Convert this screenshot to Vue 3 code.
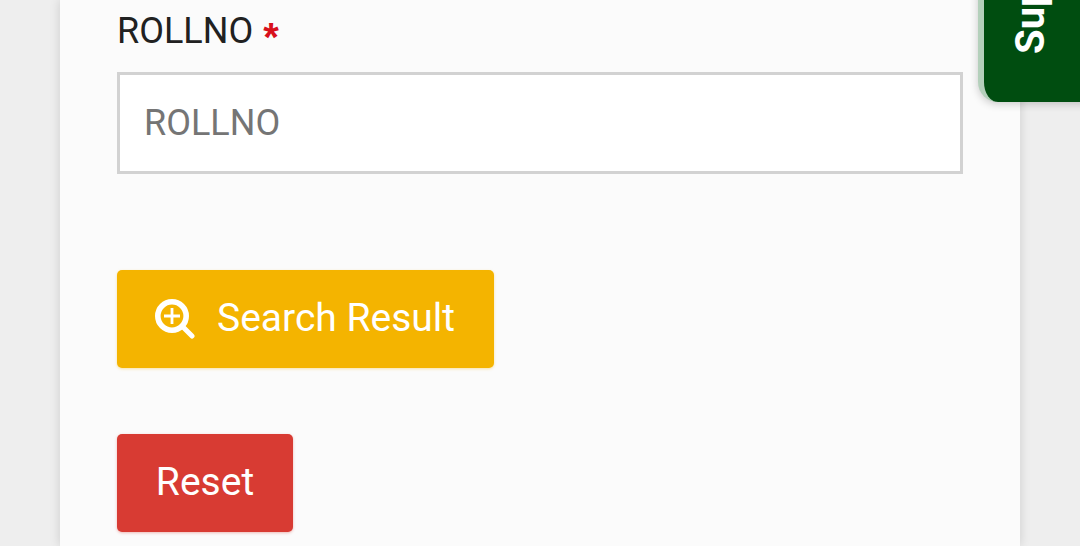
<script setup>
const label = 'ROLLNO'
</script>

<template>
  <div class="page">
    <main class="card">
      <label class="label" for="roll">{{ label }}<span class="req">*</span></label>
      <input id="roll" class="input" type="text" :placeholder="label" />
      <button class="btn search" type="button">
        <svg class="icon" viewBox="0 0 40 40" width="40" height="40" aria-hidden="true">
          <circle cx="17" cy="17" r="14.2" fill="none" stroke="#fff" stroke-width="5.6" />
          <path d="M28 28 L37 37" stroke="#fff" stroke-width="5" stroke-linecap="round" />
          <path d="M17 9 V25 M9 17 H25" stroke="#fff" stroke-width="2.8" />
        </svg>
        <span class="btn-text">Search Result</span>
      </button>
      <button class="btn reset" type="button"><span class="btn-text">Reset</span></button>
    </main>
    <aside class="tab"><span class="tab-text">Support</span></aside>
  </div>
</template>

<style scoped>
.page {
  position: relative;
  height: 546px;
  overflow: hidden;
  background: #eeeeee;
  font-family: Roboto, "Liberation Sans", sans-serif;
}
.card {
  display: flex;
  flex-direction: column;
  align-items: flex-start;
  width: 960px;
  height: 546px;
  margin-left: 60px;
  padding: 10px 57px 0;
  box-sizing: border-box;
  background: #fbfbfb;
  box-shadow: 0 0 10px rgba(0, 0, 0, 0.14);
}
.label {
  height: 42px;
  font-size: 36px;
  line-height: 42px;
  color: #212121;
}
.req {
  position: relative;
  top: 8px;
  margin-left: 10px;
  font-family: "Liberation Sans", sans-serif;
  font-size: 40px;
  line-height: 1px;
  font-weight: 700;
  color: #d8101c;
}
.input {
  width: 846px;
  height: 102px;
  margin-top: 20px;
  padding: 0 24px;
  box-sizing: border-box;
  border: 3px solid #d2d2d2;
  border-radius: 0;
  outline: none;
  background: #fff;
  font: 36px Roboto, "Liberation Sans", sans-serif;
}
.input::placeholder {
  color: #757575;
  opacity: 1;
}
.btn {
  display: flex;
  align-items: center;
  height: 98px;
  border: none;
  border-radius: 5px;
  color: #fff;
  font: 39px Roboto, "Liberation Sans", sans-serif;
}
.btn-text {
  position: relative;
  top: -1px;
}
.search {
  width: 377px;
  margin-top: 96px;
  padding: 0 0 0 38px;
  background: #f4b400;
  box-shadow: 0 1px 3px rgba(244, 180, 0, 0.35);
}
.icon {
  flex: none;
  margin-right: 22px;
}
.reset {
  justify-content: center;
  width: 176px;
  margin-top: 66px;
  padding: 0;
  background: #d83b33;
  box-shadow: 0 1px 3px rgba(216, 59, 51, 0.35);
}
.tab {
  position: absolute;
  top: -40px;
  left: 978px;
  width: 120px;
  height: 142px;
  box-sizing: border-box;
  border-left: 6px solid #b4d0bb;
  border-radius: 0 0 0 20px;
  background: #004d10;
  box-shadow: 0 2px 8px rgba(0, 0, 0, 0.2);
  overflow: hidden;
}
.tab-text {
  position: absolute;
  left: 28px;
  bottom: 48px;
  transform-origin: left bottom;
  transform: translateX(39px) rotate(-90deg);
  font-size: 40px;
  line-height: 40px;
  font-weight: 700;
  color: #fff;
  white-space: nowrap;
}
</style>
